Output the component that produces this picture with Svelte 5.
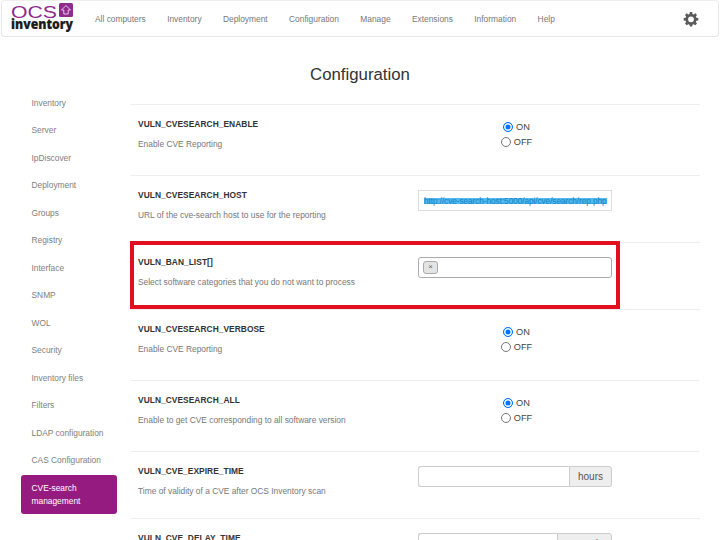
<script>
const links = ["All computers", "Inventory", "Deployment", "Configuration", "Manage", "Extensions", "Information", "Help"];
const menu = ["Inventory", "Server", "IpDiscover", "Deployment", "Groups", "Registry", "Interface", "SNMP", "WOL", "Security", "Inventory files", "Filters", "LDAP configuration", "CAS Configuration"];
</script>

<div class="page">
	<nav class="navbar">
		<svg class="logo" width="64" height="32" viewBox="0 0 64 32">
			<text x="0" y="15" textLength="46" lengthAdjust="spacingAndGlyphs" class="ocs">OCS</text>
			<rect x="48" y="0" width="14" height="14" rx="1.5" fill="#8f2b8c" />
			<path d="M55 2.5 L59.5 7 H57.2 V11 H52.8 V7 H50.5 Z" fill="none" stroke="#e8c8e6" stroke-width="1" />
			<text x="0" y="26" textLength="62" lengthAdjust="spacingAndGlyphs" class="inv">inventory</text>
		</svg>
		<ul class="links">
			{#each links as link}
				<li>{link}</li>
			{/each}
		</ul>
		<svg class="gear" width="16" height="16" viewBox="0 0 16 16">
			<path fill="#5b5b5b" fill-rule="evenodd" d="M6.800 1h2.400l.3 1.900 1.200.5 1.600-1.100 1.700 1.700-1.100 1.600.5 1.200 1.900.3v2.400l-1.900.3-.5 1.200 1.100 1.600-1.700 1.700-1.600-1.100-1.200.5-.3 1.900H6.800l-.3-1.900-1.200-.5-1.600 1.100L2 12.600l1.100-1.600-.5-1.200L.7 9.500V7.100l1.900-.3.5-1.200L2 4l1.700-1.700 1.600 1.100 1.200-.5zM8 5.400a2.900 2.900 0 1 0 0 5.800 2.900 2.900 0 0 0 0-5.800z" />
		</svg>
	</nav>

	<h1>Configuration</h1>

	<div class="main">
		<aside>
			{#each menu as item}
				<div class="item">{item}</div>
			{/each}
			<div class="item active">CVE-search management</div>
		</aside>

		<section>
			<div class="row first">
				<div class="info">
					<div class="name">VULN_CVESEARCH_ENABLE</div>
					<div class="desc">Enable CVE Reporting</div>
				</div>
				<div class="radios">
					<label><span class="radio on"></span>ON</label>
					<label><span class="radio"></span>OFF</label>
				</div>
			</div>

			<div class="row short">
				<div class="info">
					<div class="name">VULN_CVESEARCH_HOST</div>
					<div class="desc">URL of the cve-search host to use for the reporting</div>
				</div>
				<div class="control">
					<div class="input square"><span class="url">http://cve-search-host:5000/api/cve/search/rep.php</span></div>
				</div>
			</div>

			<div class="row short">
				<div class="info">
					<div class="name">VULN_BAN_LIST[]</div>
					<div class="desc">Select software categories that you do not want to process</div>
				</div>
				<div class="control">
					<div class="input select"><span class="chip">×</span></div>
				</div>
			</div>

			<div class="row">
				<div class="info">
					<div class="name">VULN_CVESEARCH_VERBOSE</div>
					<div class="desc">Enable CVE Reporting</div>
				</div>
				<div class="radios">
					<label><span class="radio on"></span>ON</label>
					<label><span class="radio"></span>OFF</label>
				</div>
			</div>

			<div class="row">
				<div class="info">
					<div class="name">VULN_CVESEARCH_ALL</div>
					<div class="desc">Enable to get CVE corresponding to all software version</div>
				</div>
				<div class="radios">
					<label><span class="radio on"></span>ON</label>
					<label><span class="radio"></span>OFF</label>
				</div>
			</div>

			<div class="row short">
				<div class="info">
					<div class="name">VULN_CVE_EXPIRE_TIME</div>
					<div class="desc">Time of validity of a CVE after OCS Inventory scan</div>
				</div>
				<div class="control">
					<div class="group">
						<div class="input"></div>
						<span class="addon">hours</span>
					</div>
				</div>
			</div>

			<div class="row short">
				<div class="info">
					<div class="name">VULN_CVE_DELAY_TIME</div>
				</div>
				<div class="control">
					<div class="group">
						<div class="input"></div>
						<span class="addon">seconds</span>
					</div>
				</div>
			</div>

			<div class="highlight"></div>
		</section>
	</div>
</div>

<style>
:global(body) {
	overflow: hidden;
	background: #fff;
}

.page {
	height: 540px;
	overflow: hidden;
	font-family: "Liberation Sans", Arial, sans-serif;
	font-size: 8.4px;
	color: #777;
}

.navbar {
	display: flex;
	align-items: center;
	box-sizing: border-box;
	height: 37px;
	margin: 0 1px;
	padding: 0 19px 0 9px;
	border: 1px solid #e7e7e7;
	border-top-color: #eee;
	border-radius: 4px;
}

.logo {
	flex: none;
	margin-top: 1px;
	overflow: visible;
}

.ocs {
	font-family: "Liberation Sans", sans-serif;
	font-size: 16px;
	fill: #8f2b8c;
}

.inv {
	font-family: "Open Sans", sans-serif;
	font-weight: 800;
	font-size: 14px;
	fill: #1c1c1c;
	stroke: #1c1c1c;
	stroke-width: 0.2px;
}

.links {
	display: flex;
	gap: 21.4px;
	list-style: none;
	margin: 0 0 0 20px;
	padding: 0;
	flex: 1;
	line-height: 12px;
}

.gear {
	flex: none;
}

h1 {
	margin: 27.5px 0 0;
	height: 39.5px;
	text-align: center;
	font-size: 16.8px;
	font-weight: 400;
	line-height: 20px;
	color: #333;
}

.main {
	display: flex;
	align-items: flex-start;
}

aside {
	flex: none;
	width: 96px;
	margin: -14.5px 13px 0 21px;
}

.item {
	box-sizing: border-box;
	height: 27.5px;
	padding: 0 10.5px;
	line-height: 27.5px;
	white-space: nowrap;
	color: #808080;
}

.item.active {
	height: 39px;
	margin-top: 0.5px;
	padding: 7px 10.5px;
	line-height: 12.5px;
	white-space: normal;
	color: #fff;
	background: #951b81;
	border-radius: 3px;
}

section {
	position: relative;
	width: 570px;
}

.row {
	display: flex;
	box-sizing: border-box;
	height: 71px;
	padding-left: 8px;
	border-top: 1px solid #eee;
}

.row.short {
	height: 67px;
}

.info {
	flex: none;
	width: 280px;
	padding-top: 13px;
}

.name {
	line-height: 12px;
	font-weight: 700;
	color: #333;
	letter-spacing: 0.05px;
}

.desc {
	margin-top: 8px;
	line-height: 12px;
}

.radios {
	display: flex;
	flex-direction: column;
	align-items: center;
	box-sizing: border-box;
	width: 194px;
	padding: 14px 0 0 3px;
}

.radios label {
	display: flex;
	align-items: center;
	gap: 3px;
	height: 15px;
	font-size: 9.2px;
	color: #444;
}

.radio {
	box-sizing: border-box;
	width: 10px;
	height: 10px;
	border: 1px solid #767676;
	border-radius: 50%;
	background: #fff;
}

.radio.on {
	border: 1.5px solid #0075ff;
	box-shadow: inset 0 0 0 1.5px #fff;
	background: #0075ff;
}

.control {
	width: 194px;
	padding-top: 14px;
}

.input {
	box-sizing: border-box;
	height: 21px;
	flex: 1;
	border: 1px solid #ccc;
	border-radius: 3px;
	background: #fff;
	display: flex;
	align-items: center;
}

.input.square {
	border-radius: 0;
	border-color: #ddd;
	padding-left: 5px;
	overflow: hidden;
}

.url {
	color: #1c80c4;
	background: #4fbcf0;
	line-height: 6px;
	white-space: nowrap;
	font-size: 8.4px;
	letter-spacing: -0.12px;
}

.input.select {
	border-color: #aaa;
	padding-left: 4px;
}

.chip {
	box-sizing: border-box;
	width: 15px;
	height: 13px;
	background: #e4e4e4;
	border: 1px solid #aaa;
	border-radius: 3px;
	text-align: center;
	line-height: 9px;
	font-size: 8px;
	color: #666;
}

.group {
	display: flex;
}

.group .input {
	border-right: 0;
	border-radius: 3px 0 0 3px;
}

.addon {
	box-sizing: border-box;
	height: 21px;
	padding: 0 8px;
	border: 1px solid #ccc;
	border-radius: 0 3px 3px 0;
	background: #eee;
	color: #555;
	font-size: 10px;
	line-height: 19px;
}

.highlight {
	position: absolute;
	left: 0;
	top: 137px;
	box-sizing: border-box;
	width: 490px;
	height: 68px;
	border: 4px solid #e01020;
	pointer-events: none;
}
</style>
